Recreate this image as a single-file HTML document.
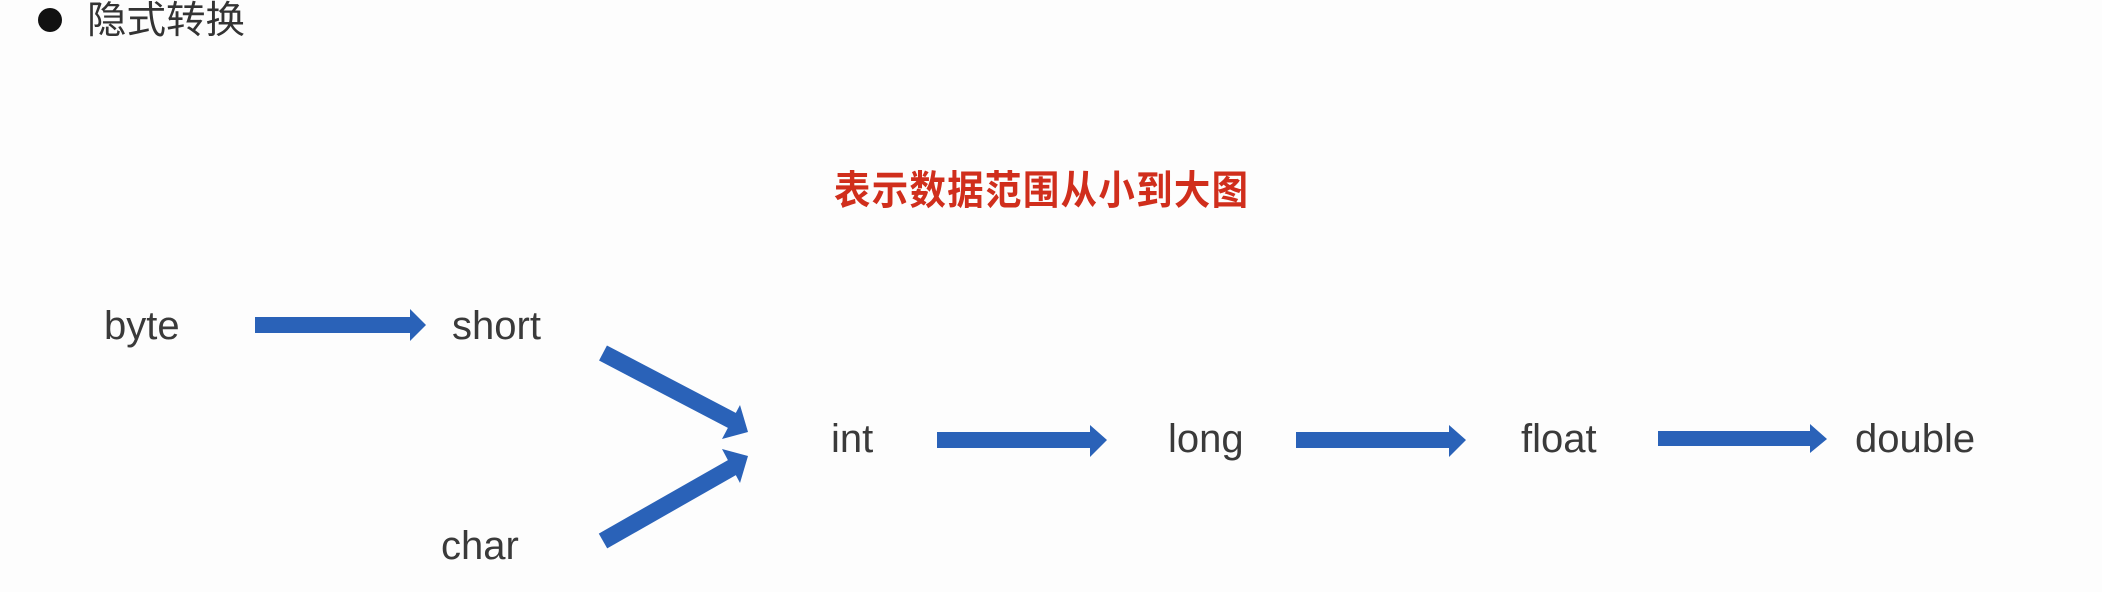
<!DOCTYPE html>
<html><head><meta charset="utf-8"><style>
html,body{margin:0;padding:0;background:#fdfdfd;width:2102px;height:592px;overflow:hidden;position:relative}
.t{position:absolute;font-family:"Liberation Sans","Noto Sans CJK SC",sans-serif;color:#3a3a3a;white-space:nowrap;line-height:1}
.w{font-size:40px}
</style></head><body>
<div style="position:absolute;left:38px;top:8px;width:24px;height:24px;border-radius:50%;background:#111"></div>
<div class="t" style="left:87px;top:2px;font-size:38px;color:#333;transform:scaleX(1.04);transform-origin:left">隐式转换</div>
<div class="t" style="left:834px;top:167px;font-size:40px;font-weight:bold;color:#d02e1c;letter-spacing:1.5px;font-family:'Noto Sans CJK SC',sans-serif;transform:scaleX(0.91);transform-origin:left">表示数据范围从小到大图</div>

<div class="t w" style="left:104px;top:306px">byte</div>
<div class="t w" style="left:452px;top:306px">short</div>
<div class="t w" style="left:441px;top:526px">char</div>
<div class="t w" style="left:831px;top:419px">int</div>
<div class="t w" style="left:1168px;top:419px">long</div>
<div class="t w" style="left:1521px;top:419px">float</div>
<div class="t w" style="left:1855px;top:419px">double</div>

<svg width="2102" height="592" style="position:absolute;left:0;top:0" fill="#2a62b8">
<polygon points="255,317 410,317 410,309 426,325 410,341 410,333 255,333"/>
<polygon points="937,432 1090,432 1090,425 1107,440 1090,457 1090,448 937,448"/>
<polygon points="1296,432 1449,432 1449,425 1466,440 1449,457 1449,448 1296,448"/>
<polygon points="1658,431 1810,431 1810,424 1827,439 1810,453 1810,446 1658,446"/>
<line x1="603" y1="353" x2="733" y2="421" stroke="#2a62b8" stroke-width="17"/>
<polygon points="740,405 748,432 722,439"/>
<line x1="603" y1="541" x2="733" y2="467" stroke="#2a62b8" stroke-width="17"/>
<polygon points="722,449 748,456 740,483"/>
</svg>
</body></html>
